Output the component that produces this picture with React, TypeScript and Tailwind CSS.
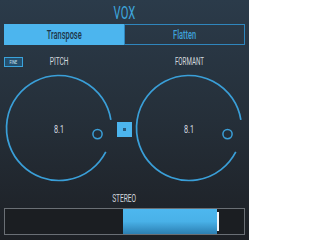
import React from "react";

const FONT = "font-['Roboto',sans-serif]";

function Narrow({ children, className = "" }: { children: React.ReactNode; className?: string }) {
  return <span className={`inline-block origin-center scale-x-[0.62] ${className}`}>{children}</span>;
}

function Knob({ value }: { value: string }) {
  const cx = 55;
  const cy = 55;
  const r = 52.5;
  const a1 = (27 * Math.PI) / 180;
  const a2 = (-9 * Math.PI) / 180;
  const sx = cx + r * Math.cos(a1);
  const sy = cy + r * Math.sin(a1);
  const ex = cx + r * Math.cos(a2);
  const ey = cy + r * Math.sin(a2);
  const ia = (9 * Math.PI) / 180;
  const ix = cx + 39 * Math.cos(ia);
  const iy = cy + 39 * Math.sin(ia);
  return (
    <div className="relative w-[110px] h-[110px] shrink-0">
      <svg width="110" height="110" viewBox="0 0 110 110" className="block">
        <path
          d={`M ${sx} ${sy} A ${r} ${r} 0 1 1 ${ex} ${ey}`}
          fill="none"
          stroke="#3a9fd8"
          strokeWidth="1.7"
        />
        <circle cx={ix} cy={iy} r="4.6" fill="none" stroke="#3a9fd8" strokeWidth="1.5" />
      </svg>
      <div className="absolute left-0 right-0 top-[50px] text-center text-[10px] leading-[14px] text-[#d6dbe0]">
        <span className="inline-block origin-center scale-x-[0.72]">{value}</span>
      </div>
    </div>
  );
}

export default function App() {
  return (
    <div
      className={`w-[249px] h-[240px] overflow-hidden bg-gradient-to-b from-[#2b3b4a] via-[#252f39] to-[#1d2025] ${FONT}`}
    >
      <div className="h-[24px] flex items-center justify-center text-[18px] leading-none text-[#3ea6de] pt-[1px]">
        <Narrow className="scale-x-[0.57]">VOX</Narrow>
      </div>
      <div className="mx-[4px] h-[21px] flex">
        <div className="flex-1 bg-[#4cb5ee] flex items-center justify-center text-[12px] font-medium text-[#1c3447]">
          <Narrow className="scale-x-[0.55]">Transpose</Narrow>
        </div>
        <div className="flex-1 border border-[#2f86bd] flex items-center justify-center text-[12px] font-medium text-[#3fa2da]">
          <Narrow className="scale-x-[0.57]">Flatten</Narrow>
        </div>
      </div>
      <div className="relative mt-[12px] h-[10px] flex pl-[6px]">
        <div className="absolute left-[4px] top-0 w-[19px] h-[10px] border border-[#3aa3dc] bg-[#24506f] flex items-center justify-center text-[6px] leading-none text-[#cfe6f5]">
          <Narrow className="scale-x-[0.7]">FINE</Narrow>
        </div>
        <div className="w-[106px] text-center text-[10px] leading-[10px] text-[#d3d8dd]">
          <Narrow className="scale-x-[0.66]">PITCH</Narrow>
        </div>
        <div className="w-[24px]" />
        <div className="w-[107px] text-center text-[10px] leading-[10px] text-[#d3d8dd]">
          <Narrow>FORMANT</Narrow>
        </div>
      </div>
      <div className="mt-[6px] flex items-center pl-[4px]">
        <Knob value="8.1" />
        <div className="ml-[3px] w-[15px] h-[15px] bg-[#4cb5ee] flex items-center justify-center mt-[3px]">
          <div className="w-[3px] h-[3px] bg-[#2a5a7c]" />
        </div>
        <div className="ml-[2px]">
          <Knob value="8.1" />
        </div>
      </div>
      <div className="mt-[11px] h-[10px] text-center text-[10px] leading-[10px] text-[#d3d8dd]">
        <Narrow className="scale-x-[0.66]">STEREO</Narrow>
      </div>
      <div className="mx-[4px] mt-[4px] h-[27px] border-[1.5px] border-[#6a6f75] bg-[#1b1e22] flex">
        <div className="w-[118px]" />
        <div className="w-[94px] bg-gradient-to-b from-[#4db7ef] via-[#49b1e8] to-[#2c7fb2]" />
        <div className="self-center w-[2px] h-[19px] bg-[#f2f4f6]" />
      </div>
    </div>
  );
}
